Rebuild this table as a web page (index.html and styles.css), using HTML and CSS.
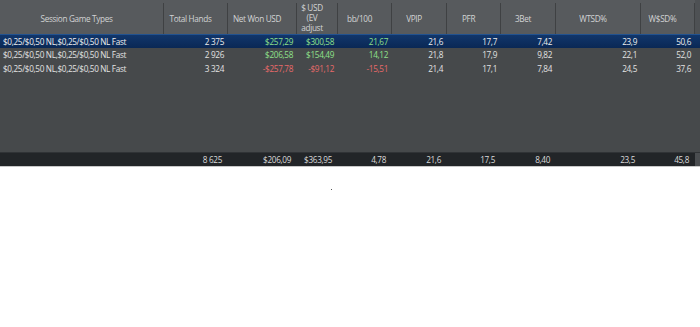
FILE: index.html
```html
<!DOCTYPE html>
<html>
<head>
<meta charset="utf-8">
<link rel="stylesheet" href="styles.css">
</head>
<body>
<div class="grid">
  <div class="row head">
    <div class="hc">Session Game Types</div>
    <div class="hc">Total Hands</div>
    <div class="hc">Net Won USD</div>
    <div class="hc multi">$ USD<br>(EV<br>adjust</div>
    <div class="hc">bb/100</div>
    <div class="hc">VPIP</div>
    <div class="hc">PFR</div>
    <div class="hc">3Bet</div>
    <div class="hc">WTSD%</div>
    <div class="hc">W$SD%</div>
    <div class="sb"></div>
  </div>
  <div class="body">
    <div class="row data sel">
      <div class="c l">$0,25/$0,50 NL,$0,25/$0,50 NL Fast</div>
      <div class="c">2 375</div>
      <div class="c g">$257,29</div>
      <div class="c g">$300,58</div>
      <div class="c g">21,67</div>
      <div class="c">21,6</div>
      <div class="c">17,7</div>
      <div class="c">7,42</div>
      <div class="c">23,9</div>
      <div class="c">50,6</div>
      <div class="c"></div>
    </div>
    <div class="row data">
      <div class="c l">$0,25/$0,50 NL,$0,25/$0,50 NL Fast</div>
      <div class="c">2 926</div>
      <div class="c g">$206,58</div>
      <div class="c g">$154,49</div>
      <div class="c g">14,12</div>
      <div class="c">21,8</div>
      <div class="c">17,9</div>
      <div class="c">9,82</div>
      <div class="c">22,1</div>
      <div class="c">52,0</div>
      <div class="c"></div>
    </div>
    <div class="row data">
      <div class="c l">$0,25/$0,50 NL,$0,25/$0,50 NL Fast</div>
      <div class="c">3 324</div>
      <div class="c r">-$257,78</div>
      <div class="c r">-$91,12</div>
      <div class="c r">-15,51</div>
      <div class="c">21,4</div>
      <div class="c">17,1</div>
      <div class="c">7,84</div>
      <div class="c">24,5</div>
      <div class="c">37,6</div>
      <div class="c"></div>
    </div>
  </div>
  <div class="row foot">
    <div class="c l"></div>
    <div class="c">8 625</div>
    <div class="c">$206,09</div>
    <div class="c">$363,95</div>
    <div class="c">4,78</div>
    <div class="c">21,6</div>
    <div class="c">17,5</div>
    <div class="c">8,40</div>
    <div class="c">23,5</div>
    <div class="c">45,8</div>
    <div class="c fsb"></div>
  </div>
</div>
<div class="below"><span class="dot"></span></div>
</body>
</html>
```

FILE: styles.css
```css
html, body {
  margin: 0;
  padding: 0;
  background: #ffffff;
}
body {
  font-family: "Open Sans", "Liberation Sans", sans-serif;
  font-size: 8.2px;
  letter-spacing: -0.33px;
  font-weight: 500;
  color: #e2e2e2;
}
.grid {
  width: 700px;
  display: flex;
  flex-direction: column;
}
.row {
  display: grid;
  grid-template-columns: 164px 64px 69px 41px 54px 55px 54px 55px 85px 54px 5px;
}
.head {
  height: 34px;
  background: #575a5d;
  color: #d2d3d4;
}
.hc {
  margin: 3px 0;
  border-right: 1px solid #3f4143;
  display: flex;
  align-items: center;
  justify-content: center;
  text-align: center;
  padding-right: 10px;
  line-height: 11px;
  white-space: nowrap;
}
.hc.multi {
  line-height: 10px;
  padding-bottom: 1px;
}
.sb {
  background: #4e5154;
}
.body {
  height: 118px;
  background: #46494b;
}
.data {
  height: 14px;
  line-height: 14px;
}
.c {
  text-align: right;
  padding-right: 4px;
  white-space: nowrap;
  overflow: hidden;
}
.c.l {
  text-align: left;
  padding-left: 3px;
  padding-right: 0;
}
.sel {
  height: 13px;
  line-height: 13px;
  background: linear-gradient(#11366b, #0a2855);
  border-top: 1px solid #22528f;
  color: #eeeeee;
}
.g {
  color: #8fe08a;
}
.r {
  color: #e86a6a;
}
.foot {
  height: 13px;
  line-height: 13px;
  background: #222528;
  border-top: 1px solid #303336;
  border-bottom: 1px solid #c8c8c8;
  color: #dadada;
}
.foot .c {
  padding-right: 6px;
}
.foot .fsb {
  padding: 0;
  background: #4a4d50;
}
.below {
  height: 160px;
  display: flex;
  justify-content: center;
  padding-top: 22px;
  box-sizing: border-box;
}
.dot {
  width: 1px;
  height: 1px;
  background: #555;
  margin-left: -38px;
}
```
